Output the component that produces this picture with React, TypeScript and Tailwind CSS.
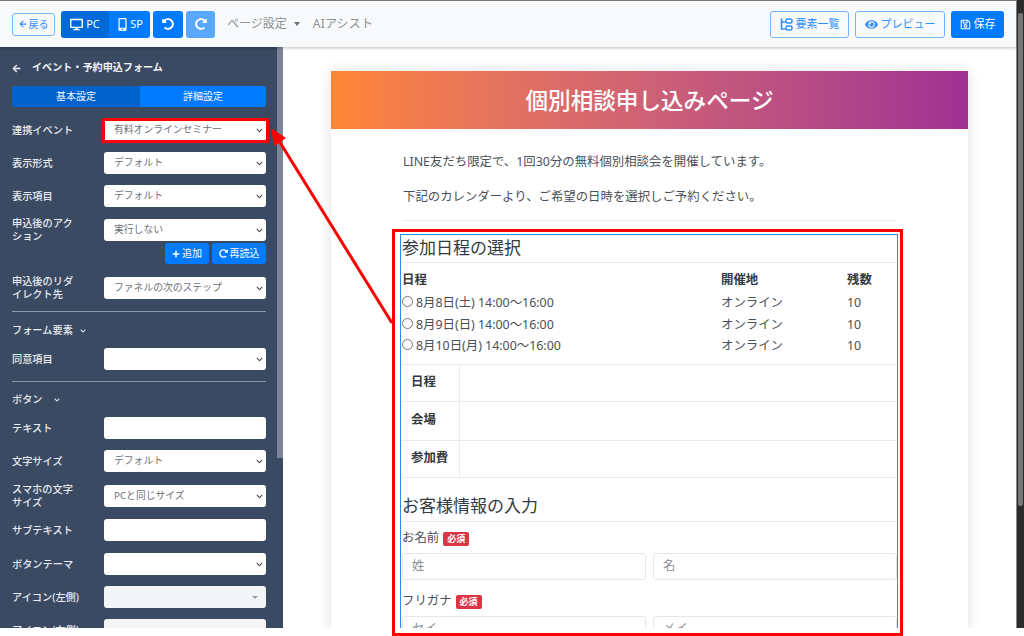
import { FaArrowLeft, FaChevronDown, FaDesktop, FaEye, FaMobileAlt, FaPlus, FaRedoAlt, FaRegSave, FaUndoAlt } from "react-icons/fa";

const sans = "font-['Noto_Sans','Noto_Sans_CJK_JP',sans-serif]";

function ElementsIcon() {
  return (
    <svg width="13" height="13" viewBox="0 0 13 13" fill="none" stroke="currentColor" strokeWidth="1.5">
      <path d="M1.5 0.5v10.5h4" />
      <path d="M1.5 4h4" />
      <rect x="6" y="1" width="6" height="4" rx="1.5" />
      <rect x="6" y="8" width="6" height="4" rx="1.5" />
    </svg>
  );
}

function Field({ value, kind = "select" }: { value?: string; kind?: "select" | "input" | "disabled" }) {
  if (kind === "input") {
    return <div className="h-[22px] w-[162px] rounded-[3px] bg-white" />;
  }
  if (kind === "disabled") {
    return (
      <div className="flex h-[22px] w-[162px] items-center justify-end rounded-[3px] bg-[#f4f5f7] pr-[8px]">
        <span className="border-x-[3px] border-t-[3px] border-x-transparent border-t-[#9aa0a6]" />
      </div>
    );
  }
  return (
    <div className="flex h-[22px] w-[162px] items-center justify-between rounded-[3px] bg-white pl-[10px] pr-[3px] text-[9.8px] text-[#6b7178]">
      <span className="pt-[1px]">{value}</span>
      <FaChevronDown className="size-[7px] text-[#444b52]" />
    </div>
  );
}

function Row({ label, children, mb = "mb-[11px]" }: { label: string; children: React.ReactNode; mb?: string }) {
  return (
    <div className={`flex items-start ${mb}`}>
      <div className="flex h-[22px] w-[92px] shrink-0 items-center pr-[24px] text-[10.2px] font-medium leading-[13px] text-[#e8ebef]">
        {label}
      </div>
      <div>{children}</div>
    </div>
  );
}

function Sidebar() {
  return (
    <aside className="relative h-[581px] w-[283px] shrink-0 overflow-hidden bg-[#3b4a63] px-[12px] pt-[14px]">
      <div className="absolute right-0 top-0 h-[411px] w-[6px] bg-[#7b8595]" />
      <div className="flex h-[14px] items-center gap-[11px] text-[10.1px] font-bold text-[#f0f2f5]">
        <FaArrowLeft className="size-[9px]" />
        イベント・予約申込フォーム
      </div>
      <div className="mt-[11px] mb-[12px] flex h-[21px] w-[254px] overflow-hidden rounded-[3px] text-[10px] text-[#f4f8ff]">
        <div className="flex w-[128px] items-center justify-center bg-[#0062cc]">基本設定</div>
        <div className="flex flex-1 items-center justify-center bg-[#007bff]">詳細設定</div>
      </div>
      <Row label="連携イベント"><Field value="有料オンラインセミナー" /></Row>
      <Row label="表示形式"><Field value="デフォルト" /></Row>
      <Row label="表示項目" mb="mb-[12px]"><Field value="デフォルト" /></Row>
      <Row label="申込後のアクション" mb="mb-[13px]">
        <Field value="実行しない" />
        <div className="mt-[2px] flex justify-end gap-[3px] text-[10px] text-white">
          <div className="flex h-[21px] w-[44px] items-center justify-center gap-[2px] rounded-[3px] bg-[#007bff]">
            <FaPlus className="size-[8px]" />追加
          </div>
          <div className="flex h-[21px] w-[54px] items-center justify-center gap-[2px] rounded-[3px] bg-[#007bff]">
            <FaRedoAlt className="size-[9px]" />再読込
          </div>
        </div>
      </Row>
      <Row label="申込後のリダイレクト先" mb="mb-[12px]"><Field value="ファネルの次のステップ" /></Row>
      <div className="h-px w-[254px] bg-[#8d97a6]" />
      <div className="mt-[12px] mb-[11px] flex h-[13px] items-center gap-[7px] text-[10.2px] font-medium text-[#e8ebef]">
        フォーム要素<FaChevronDown className="size-[6px]" />
      </div>
      <Row label="同意項目"><Field value="" /></Row>
      <div className="h-px w-[254px] bg-[#8d97a6]" />
      <div className="mt-[11px] mb-[11px] flex h-[13px] items-center gap-[11px] text-[10.2px] font-medium text-[#e8ebef]">
        ボタン<FaChevronDown className="size-[6px]" />
      </div>
      <Row label="テキスト"><Field kind="input" /></Row>
      <Row label="文字サイズ" mb="mb-[13px]"><Field value="デフォルト" /></Row>
      <Row label="スマホの文字サイズ" mb="mb-[12px]"><Field value="PCと同じサイズ" /></Row>
      <Row label="サブテキスト" mb="mb-[12px]"><Field kind="input" /></Row>
      <Row label="ボタンテーマ"><Field value="" /></Row>
      <Row label="アイコン(左側)"><Field kind="disabled" /></Row>
      <Row label="アイコン(右側)"><Field kind="disabled" /></Row>
    </aside>
  );
}

function TopBar() {
  return (
    <header className="relative z-10 flex h-[47px] items-center border-t border-[#777] bg-[#f8f9fa] pl-[12px] pr-[12px] shadow-[0_1px_3px_rgba(0,0,0,0.25)]">
      <div className="flex h-[23px] w-[43px] items-center justify-center gap-[2px] rounded-[3px] border border-[#75b5ff] text-[10px] text-[#2f8fff]">
        <FaArrowLeft className="size-[8px]" />戻る
      </div>
      <div className="ml-[6px] flex h-[27px] w-[89px] overflow-hidden rounded-[3px] text-[11px] text-white">
        <div className="flex w-[48px] items-center justify-center gap-[3px] bg-[#0069d9]">
          <FaDesktop className="size-[13px]" />PC
        </div>
        <div className="flex flex-1 items-center justify-center gap-[1px] bg-[#007bff]">
          <FaMobileAlt className="size-[13px]" />SP
        </div>
      </div>
      <div className="ml-[3px] flex h-[27px] w-[30px] items-center justify-center rounded-[3px] bg-[#007bff] text-white">
        <FaUndoAlt className="size-[12px]" />
      </div>
      <div className="ml-[3px] flex h-[27px] w-[29px] items-center justify-center rounded-[3px] bg-[#59a7ff] text-white">
        <FaRedoAlt className="size-[12px]" />
      </div>
      <div className="ml-[12px] flex items-center gap-[7px] text-[12px] text-[#8b9095]">
        ページ設定
        <span className="border-x-[3.5px] border-t-[4px] border-x-transparent border-t-[#6c7176]" />
      </div>
      <div className="ml-[13px] text-[12px] tracking-[0.2px] text-[#8b9095]">AIアシスト</div>
      <div className="ml-auto flex items-center gap-[6px] text-[11px]">
        <div className="flex h-[27px] w-[79px] items-center justify-center gap-[3px] rounded-[3px] border border-[#75b5ff] text-[#2f8fff]">
          <ElementsIcon />要素一覧
        </div>
        <div className="flex h-[27px] w-[90px] items-center justify-center gap-[3px] rounded-[3px] border border-[#75b5ff] text-[#2f8fff]">
          <FaEye className="size-[13px]" />プレビュー
        </div>
        <div className="flex h-[27px] w-[53px] items-center justify-center gap-[3px] rounded-[3px] bg-[#007bff] text-white">
          <FaRegSave className="size-[11px]" />保存
        </div>
      </div>
    </header>
  );
}

const schedule = ["8月8日(土) 14:00〜16:00", "8月9日(日) 14:00〜16:00", "8月10日(月) 14:00〜16:00"];

function Required() {
  return (
    <span className="ml-[4px] inline-flex h-[14px] w-[26px] items-center justify-center rounded-[2px] bg-[#dc3545] text-[9px] font-bold text-white">
      必須
    </span>
  );
}

function Inputs({ first, last }: { first: string; last: string }) {
  return (
    <div className="mt-[6px] flex gap-[7px]">
      <div className="flex h-[27px] w-[244px] items-center rounded-[3px] border border-[#e4e7ea] pl-[9px] text-[12.4px] text-[#8b9095]">{first}</div>
      <div className="flex h-[27px] w-[244px] items-center rounded-[3px] border border-[#e4e7ea] pl-[9px] text-[12.4px] text-[#8b9095]">{last}</div>
    </div>
  );
}

function Form() {
  return (
    <div className="h-[394px] w-[498px] border-x border-t border-[#2a8bf0] pl-px text-[#343a40]">
      <div className="flex h-[28px] items-center border-b border-[#e9ecef] pb-[3px] text-[17px] leading-none">参加日程の選択</div>
      <div className="mt-[9px] flex h-[16px] items-center text-[12.4px] font-bold">
        <span className="w-[319px]">日程</span>
        <span className="w-[126px]">開催地</span>
        <span>残数</span>
      </div>
      {schedule.map((s, i) => (
        <div key={s} className={`flex h-[21.5px] items-center text-[12.4px] text-[#495057] ${i === 0 ? "mt-[5px]" : ""}`}>
          <div className="flex w-[319px] items-center">
            <span className="mb-[4px] size-[11px] shrink-0 rounded-full border border-[#777]" />
            <span className="ml-[3px]">{s}</span>
          </div>
          <span className="w-[126px]">オンライン</span>
          <span>10</span>
        </div>
      ))}
      <div className="mt-[6px] border-t border-[#e9ecef]">
        {[["日程", "h-[37px]"], ["会場", "h-[39px]"], ["参加費", "h-[37px]"]].map(([t, h]) => (
          <div key={t} className={`flex border-b border-[#e9ecef] ${h}`}>
            <div className="flex w-[58px] items-center border-r border-[#e9ecef] pl-[9px] text-[12.4px] font-bold">{t}</div>
          </div>
        ))}
      </div>
      <div className="mt-[16px] flex h-[28px] items-center border-b border-[#e9ecef] pb-[4px] text-[17px] leading-none">お客様情報の入力</div>
      <div className="mt-[9px] flex h-[16px] items-center text-[12.4px] text-[#495057]">お名前<Required /></div>
      <Inputs first="姓" last="名" />
      <div className="mt-[14px] flex h-[16px] items-center text-[12.4px] text-[#495057]">フリガナ<Required /></div>
      <Inputs first="セイ" last="メイ" />
    </div>
  );
}

function MainPanel() {
  return (
    <main className="h-[581px] flex-1 overflow-hidden bg-white pl-[48px] pt-[24px]">
      <div className="w-[637px] bg-white shadow-[0_0_12px_rgba(0,0,0,0.12)]">
        <div className="flex h-[58px] items-center justify-center bg-gradient-to-r from-[#ff8633] to-[#a03093] pt-[1px] text-[22.6px] font-medium text-white">
          個別相談申し込みページ
        </div>
        <div className="pl-[72px] pt-[23px] pb-[40px] text-[12.4px] text-[#495057]">
          <p className="h-[19px] leading-[19px]">LINE友だち限定で、1回30分の無料個別相談会を開催しています。</p>
          <p className="mt-[16px] h-[19px] leading-[19px]">下記のカレンダーより、ご希望の日時を選択しご予約ください。</p>
          <div className="mt-[14px] h-px w-[494px] bg-[#e9ecef]" />
          <div className="-ml-[3px] mt-[13px]">
            <Form />
          </div>
        </div>
      </div>
    </main>
  );
}

function Annotations() {
  return (
    <>
      <div className="absolute left-[102px] top-[118px] h-[25px] w-[167px] border-[3px] border-[#ff0000]" />
      <div className="absolute left-[392px] top-[229px] h-[407px] w-[511px] border-[3px] border-[#ff0000]" />
      <svg className="absolute left-0 top-0" width="1024" height="636" fill="none">
        <path d="M392 323 L276 136" stroke="#ff0000" strokeWidth="3" />
        <path d="M271 128 L286 138 L274 146 Z" fill="#ff0000" />
      </svg>
    </>
  );
}

export default function App() {
  return (
    <div className={`relative h-[636px] w-[1024px] overflow-hidden bg-white ${sans}`}>
      <div className="flex h-[628px]">
        <div className="flex w-[1016px] flex-col">
          <TopBar />
          <div className="flex">
            <Sidebar />
            <MainPanel />
          </div>
        </div>
        <div className="relative w-[8px] border-l border-[#888] bg-[#2c2c2c]">
          <div className="absolute left-[1px] top-[13px] h-[493px] w-[5px] rounded-[2px] bg-[#777]" />
        </div>
      </div>
      <Annotations />
    </div>
  );
}
